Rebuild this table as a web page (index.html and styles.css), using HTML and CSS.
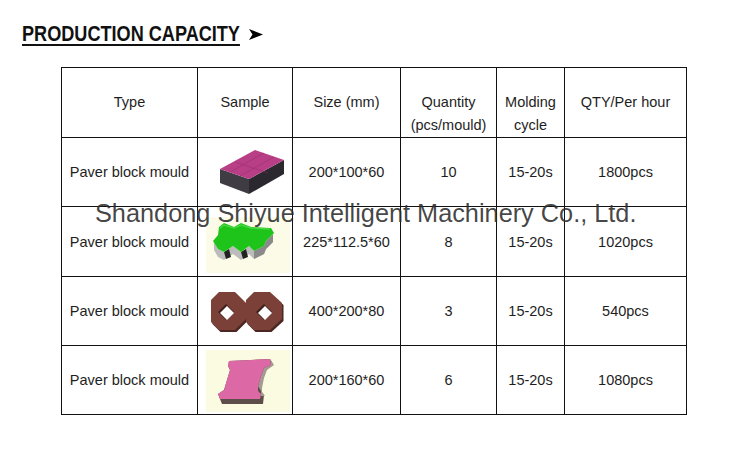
FILE: index.html
```html
<!DOCTYPE html>
<html>
<head>
<meta charset="utf-8">
<link rel="stylesheet" href="styles.css">
</head>
<body>
<div class="page">
  <h1 class="title"><span class="title-text">PRODUCTION CAPACITY</span>
    <svg class="arrow" width="14" height="11" viewBox="0 0 14 11"><path d="M0 0 L14 5.5 L0 11 L3.5 5.5 Z" fill="#000"/></svg>
  </h1>
  <div class="table-wrap">
    <table class="cap">
      <colgroup>
        <col class="c1"><col class="c2"><col class="c3"><col class="c4"><col class="c5"><col class="c6">
      </colgroup>
      <thead>
        <tr class="head">
          <th>Type</th>
          <th>Sample</th>
          <th>Size (mm)</th>
          <th>Quantity<br>(pcs/mould)</th>
          <th>Molding<br>cycle</th>
          <th>QTY/Per hour</th>
        </tr>
      </thead>
      <tbody>
        <tr class="r69">
          <td>Paver block mould</td>
          <td class="sample">
            <svg width="95" height="68" viewBox="0 0 95 68">
              <polygon points="22,31 51,41 51,56 22,45" fill="#3f3c44"/>
              <polygon points="51,41 86,22 86,36 51,56" fill="#2b292f"/>
              <polygon points="22,31 57,12 86,22 51,41" fill="#b83e86"/>
              <g stroke="#932a68" stroke-width="0.7" fill="none" opacity="0.6">
                <line x1="32" y1="34" x2="66" y2="15"/>
                <line x1="42" y1="38" x2="76" y2="19"/>
                <line x1="37" y1="24" x2="70" y2="35"/>
              </g>
            </svg>
          </td>
          <td>200*100*60</td>
          <td>10</td>
          <td>15-20s</td>
          <td>1800pcs</td>
        </tr>
        <tr class="r70">
          <td>Paver block mould</td>
          <td class="sample">
            <svg width="95" height="69" viewBox="0 0 95 69">
              <rect x="8" y="10" width="84" height="56" fill="#fbfbe8"/>
              <polygon points="16,35 20,42 26,45 35,39 43,45 51,39 56,44 66,39 68,34 75,27 75,35 68,42 66,47 56,52 51,47 43,53 35,47 26,53 20,50 16,43" fill="#bcbcbc"/>
              <polygon points="56,44 66,39 68,34 75,27 75,35 68,42 66,47 56,52" fill="#8a8a8a"/>
              <polygon points="26,45 31,42 33,50 28,52" fill="#222"/>
              <polygon points="43,45 48,42 50,50 45,52" fill="#222"/>
              <polygon points="21,20 26,16 36,20 43,16 53,20 73,21 76,26 68,34 66,39 56,44 51,39 43,45 35,39 26,45 20,42 15,34 20,28" fill="#1fc41a"/>
              <polyline points="22,21 26,18 36,21 43,18 53,21 72,22" fill="none" stroke="#45d83f" stroke-width="1.5"/>
            </svg>
          </td>
          <td>225*112.5*60</td>
          <td>8</td>
          <td>15-20s</td>
          <td>1020pcs</td>
        </tr>
        <tr class="r69">
          <td>Paver block mould</td>
          <td class="sample">
            <svg width="95" height="68" viewBox="0 0 95 68">
              <g fill="#4a2722" transform="translate(1.5,2)">
                <polygon points="21,15 37,15 48,26 48,42 37,53 21,53 13,45 13,23"/>
                <polygon points="56,15 72,15 84,26 84,42 72,53 56,53 48,45 48,23"/>
              </g>
              <g fill="#7b4038">
                <polygon points="21,15 37,15 48,26 48,42 37,53 21,53 13,45 13,23"/>
                <polygon points="56,15 72,15 84,26 84,42 72,53 56,53 48,45 48,23"/>
              </g>
              <polygon points="28,27 36,35 28,43 20,35" fill="#3f201c"/>
              <polygon points="66,27 74,35 66,43 58,35" fill="#3f201c"/>
              <polygon points="29,29 36,36 29,43 22,36" fill="#fff"/>
              <polygon points="67,29 74,36 67,43 60,36" fill="#fff"/>
            </svg>
          </td>
          <td>400*200*80</td>
          <td>3</td>
          <td>15-20s</td>
          <td>540pcs</td>
        </tr>
        <tr class="r69">
          <td>Paver block mould</td>
          <td class="sample">
            <svg width="95" height="68" viewBox="0 0 95 68">
              <rect x="8" y="4" width="84" height="62" fill="#fbfbe2"/>
              <polygon points="31,15 72,13 75,18 69,22 66,30 63,40 63,45 66,49 65,58 24,58 22,53 20,48 26,44 29,34 32,24 30,20" fill="#5d4e4a"/>
              <polygon points="72,13 76,19 69,24 66,32 64,42 64,46 67,50 63,50 63,45 60,40 63,30 66,22 73,19" fill="#a59a92"/>
              <polygon points="31,15 72,13 73,19 66,22 63,30 60,40 60,45 63,48 62,53 22,53 20,48 26,44 29,34 32,24 30,20" fill="#dc68a6"/>
            </svg>
          </td>
          <td>200*160*60</td>
          <td>6</td>
          <td>15-20s</td>
          <td>1080pcs</td>
        </tr>
      </tbody>
    </table>
    <div class="watermark">Shandong Shiyue Intelligent Machinery Co., Ltd.</div>
  </div>
</div>
</body>
</html>
```

FILE: styles.css
```css
html, body {
  margin: 0;
  padding: 0;
  background: #fff;
}

.page {
  position: relative;
  width: 750px;
  height: 453px;
  font-family: "Liberation Sans", Arial, sans-serif;
  color: #1e1e1e;
}

.title {
  margin: 0;
  padding: 21px 0 0 22px;
  height: 46px;
  box-sizing: border-box;
  display: flex;
  align-items: center;
  gap: 9px;
  font-family: "Liberation Sans", Arial, sans-serif;
  font-weight: bold;
  font-size: 22px;
  line-height: 24px;
  color: #111;
}

.title-text {
  display: inline-block;
  transform: scaleX(0.823);
  transform-origin: left center;
  margin-right: -47px;
  text-decoration: underline;
  text-decoration-thickness: 2px;
  text-underline-offset: 3px;
}

.arrow {
  display: block;
  margin-top: 2px;
}

.table-wrap {
  position: relative;
  margin-left: 61px;
  margin-top: 21px;
  width: 625px;
}

.cap {
  border-collapse: collapse;
  table-layout: fixed;
  width: 625px;
  font-size: 14.5px;
}

.c1 { width: 136px; }
.c2 { width: 95px; }
.c3 { width: 108px; }
.c4 { width: 96px; }
.c5 { width: 68px; }
.c6 { width: 122px; }

.cap th,
.cap td {
  border: 1px solid #111;
  padding: 0;
  text-align: center;
  font-weight: normal;
  overflow: hidden;
}

.head th {
  height: 69px;
  vertical-align: top;
  padding-top: 23px;
  box-sizing: border-box;
  line-height: 23px;
}

.cap td {
  vertical-align: middle;
  line-height: 18px;
}

.r69 td { height: 68px; }
.r70 td { height: 69px; }

.sample svg {
  display: block;
}

.watermark {
  position: absolute;
  left: 34px;
  top: 134px;
  font-size: 25.3px;
  line-height: 25px;
  white-space: nowrap;
  color: rgba(45, 45, 45, 0.88);
}
```
